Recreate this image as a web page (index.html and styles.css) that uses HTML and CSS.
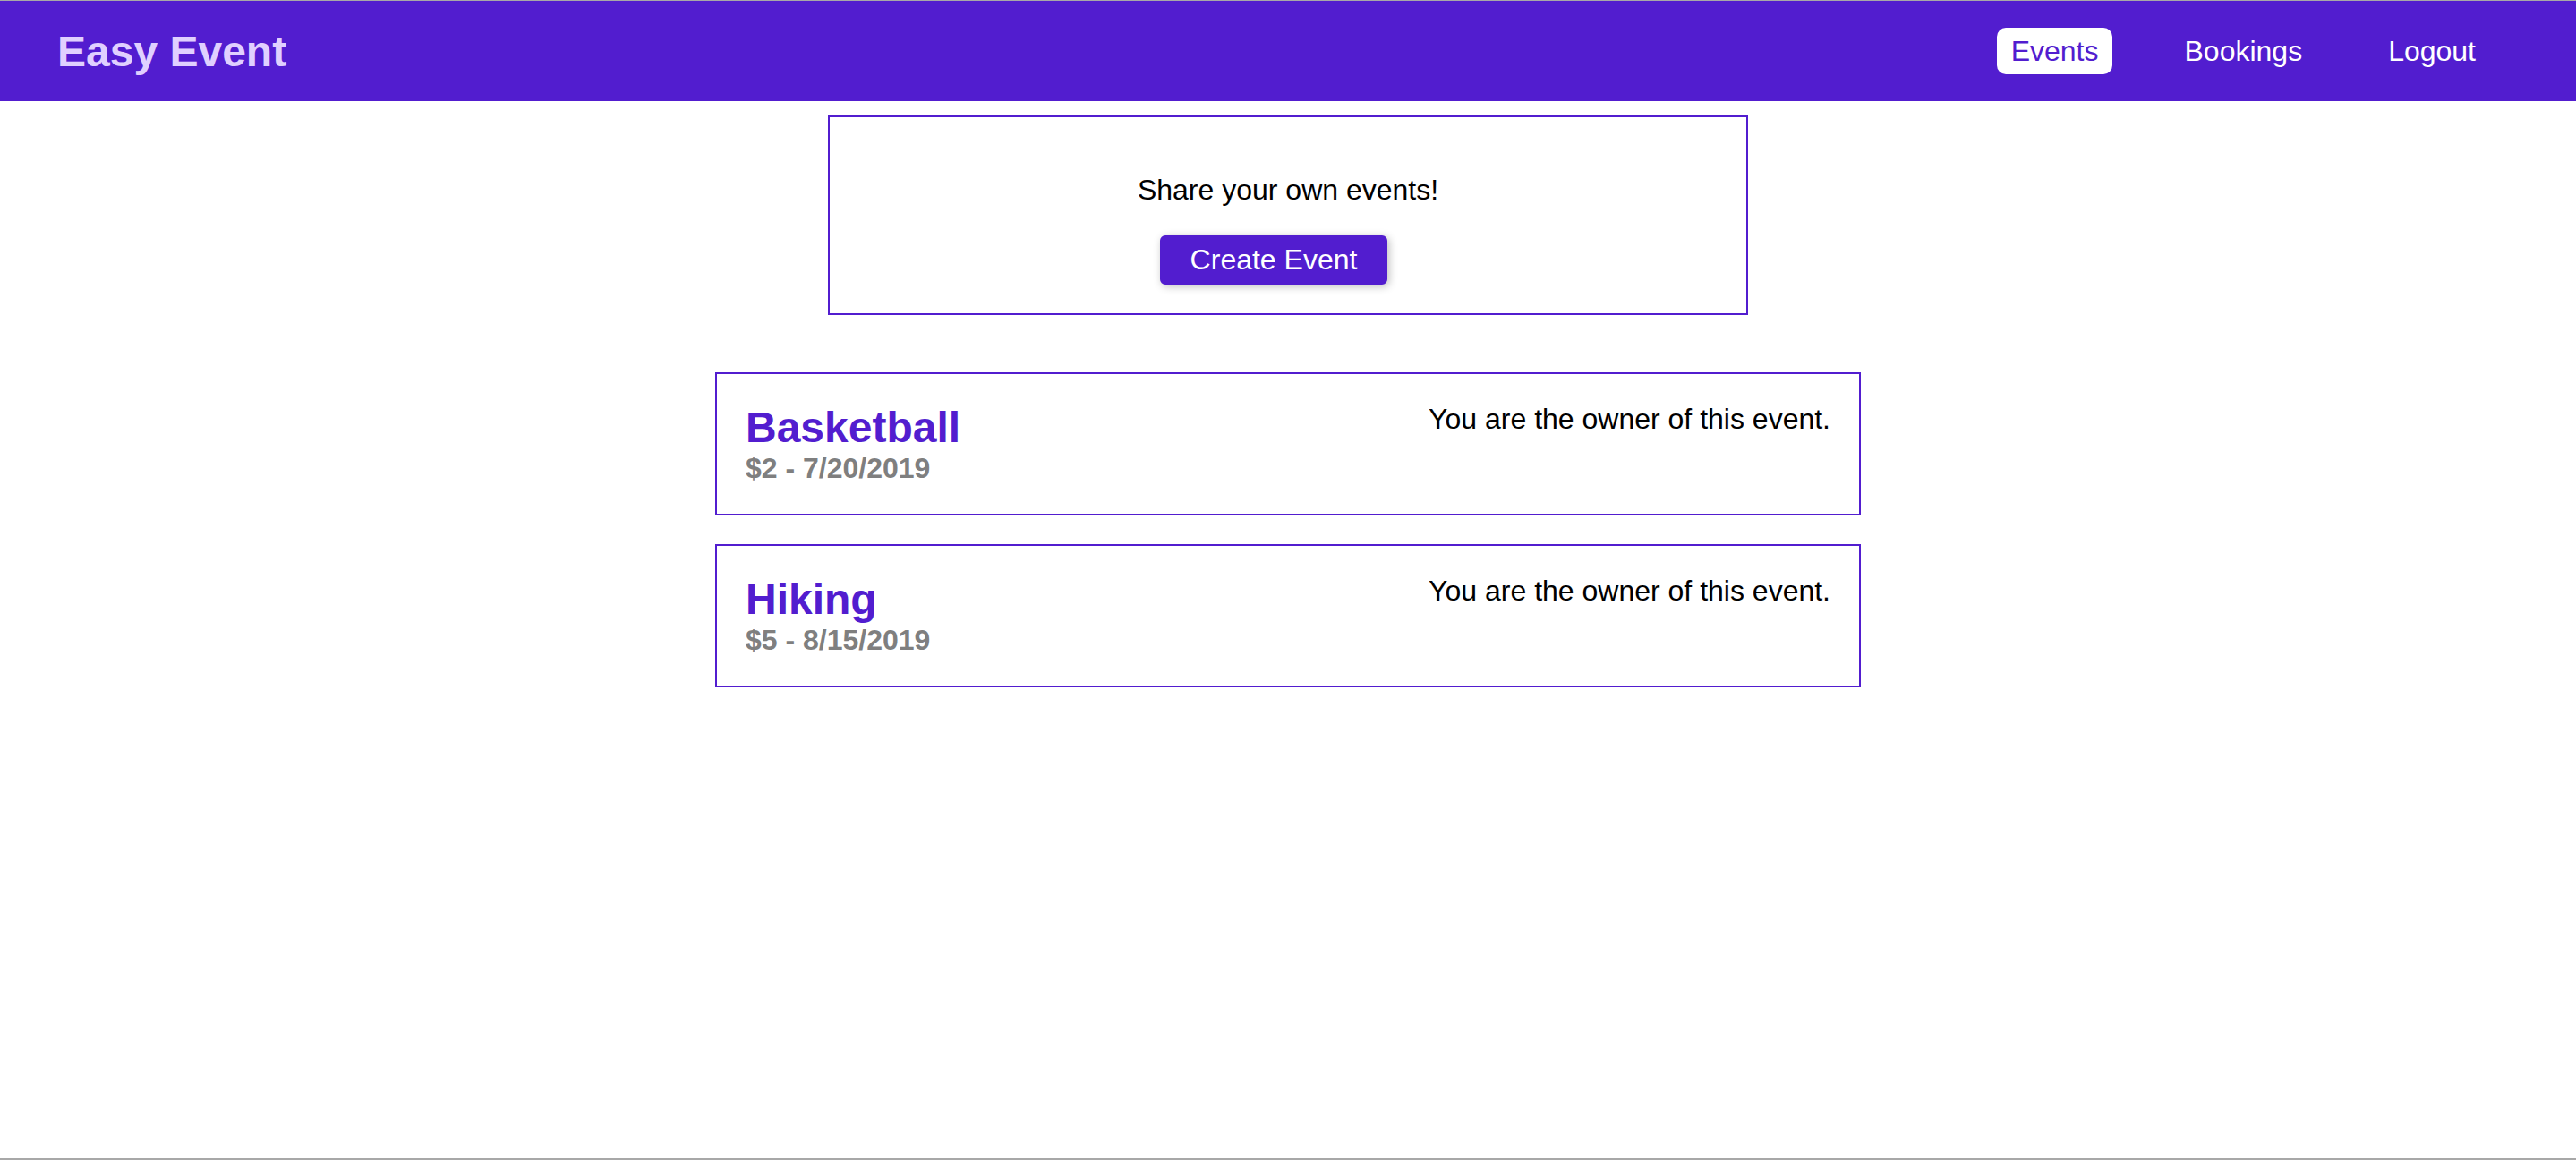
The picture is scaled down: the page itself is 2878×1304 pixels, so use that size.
FILE: index.html
```html
<!DOCTYPE html>
<html lang="en">
<head>
<meta charset="utf-8">
<title>Easy Event</title>
<link rel="stylesheet" href="styles.css">
</head>
<body>
<div class="frame-line frame-line--top"></div>
<header class="main-navigation">
  <div class="main-navigation__logo"><h1>Easy Event</h1></div>
  <nav class="main-navigation__items">
    <ul>
      <li><a href="#" class="active">Events</a></li>
      <li><a href="#">Bookings</a></li>
      <li><a href="#">Logout</a></li>
    </ul>
  </nav>
</header>
<main class="main-content">
  <div class="events-control">
    <p>Share your own events!</p>
    <button class="btn">Create Event</button>
  </div>
  <ul class="event__list">
    <li class="events__list-item">
      <div>
        <h1>Basketball</h1>
        <h2>$2 - 7/20/2019</h2>
      </div>
      <div>
        <p>You are the owner of this event.</p>
      </div>
    </li>
    <li class="events__list-item">
      <div>
        <h1>Hiking</h1>
        <h2>$5 - 8/15/2019</h2>
      </div>
      <div>
        <p>You are the owner of this event.</p>
      </div>
    </li>
  </ul>
</main>
<div class="frame-line frame-line--bottom"></div>
</body>
</html>
```
FILE: styles.css
```css
html, body {
  margin: 0;
  padding: 0;
}

body {
  font-family: "Liberation Sans", Arial, Helvetica, sans-serif;
  font-size: 32px;
  color: #000;
  background: #fff;
  min-height: 100vh;
  display: flex;
  flex-direction: column;
  box-sizing: border-box;
}

.frame-line {
  background: #a8a8a8;
  flex: none;
}

.frame-line--top {
  height: 1px;
}

.frame-line--bottom {
  height: 2px;
  margin-bottom: 8px;
}

.main-navigation {
  flex: none;
  height: 112px;
  background: #521dcf;
  padding: 0 64px;
  display: flex;
  align-items: center;
  justify-content: space-between;
}

.main-navigation__logo h1 {
  margin: 0;
  font-size: 48px;
  font-weight: bold;
  color: #e0d0ff;
}

.main-navigation__items ul {
  list-style: none;
  margin: 0;
  padding: 0;
  display: flex;
  align-items: center;
}

.main-navigation__items li {
  margin: 0 32px;
}

.main-navigation__items a {
  display: block;
  text-decoration: none;
  color: #fff;
  padding: 8px 16px;
  border-radius: 10px;
  font-size: 32px;
  line-height: 36px;
}

.main-navigation__items a.active {
  background: #fff;
  color: #521dcf;
}

.main-content {
  flex: 1;
}

.events-control {
  text-align: center;
  border: 2px solid #521dcf;
  padding: 32px;
  margin: 16px auto 0;
  width: 960px;
}

.events-control p {
  margin: 31px 0 32px;
  line-height: 37px;
}

.btn {
  font: inherit;
  font-size: 32px;
  line-height: 35px;
  border: 2px solid #521dcf;
  border-radius: 6px;
  padding: 8px 32px;
  margin: 0 32px 0 0;
  background: #521dcf;
  color: #fff;
  box-shadow: 2px 2px 10px rgba(0, 0, 0, 0.26);
  cursor: pointer;
}

.event__list {
  width: 1280px;
  margin: 64px auto 0;
  list-style: none;
  padding: 0;
}

.events__list-item {
  margin: 32px 0;
  padding: 32px;
  border: 2px solid #521dcf;
  display: flex;
  justify-content: space-between;
  align-items: flex-start;
}

.event__list .events__list-item:first-child {
  margin-top: 0;
}

.events__list-item h1 {
  margin: 0;
  font-size: 48px;
  line-height: 55px;
  color: #521dcf;
}

.events__list-item h2 {
  margin: 0;
  font-size: 32px;
  line-height: 37px;
  color: #7f7f7f;
}

.events__list-item p {
  margin: 0;
  line-height: 36px;
}
```
